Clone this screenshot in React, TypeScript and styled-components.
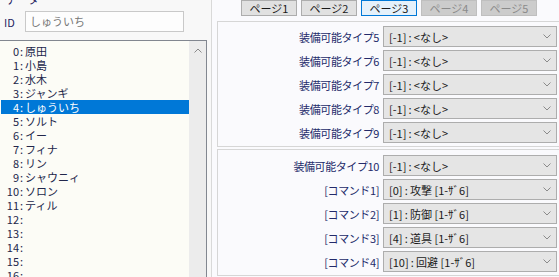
import React from 'react';
import styled, { createGlobalStyle, css } from 'styled-components';

const GlobalStyle = createGlobalStyle`
  html, body {
    margin: 0;
    padding: 0;
    overflow: hidden;
    background: #f0f0f0;
  }
  body {
    font-family: 'Noto Sans CJK JP', 'Noto Sans', sans-serif;
  }
`;

const Shell = styled.div`
  display: flex;
  width: 559px;
  height: 277px;
  overflow: hidden;
`;

const LeftPane = styled.div`
  width: 211px;
  display: flex;
  flex-direction: column;
  background: #f8f8f8;
`;

const CaptionRow = styled.div`
  display: flex;
  align-items: center;
  margin-top: -8px;
  height: 14px;
  padding-left: 6px;
  font-size: 11px;
  color: #1f2360;

  &::after {
    content: '';
    flex: 1;
    margin-left: 2px;
    margin-right: 4px;
    border-top: 1px solid #dcdcdc;
  }
`;

const IdRow = styled.div`
  display: flex;
  align-items: center;
  margin-top: 5px;
  padding-left: 4px;
  height: 21px;
`;

const IdLabel = styled.span`
  width: 21px;
  font-size: 11px;
  color: #1f2360;
`;

const IdInput = styled.div`
  box-sizing: border-box;
  width: 159px;
  height: 21px;
  border: 1px solid #c9c9c9;
  background: #fdfdfd;
  padding-left: 4px;
  font-size: 11px;
  line-height: 19px;
  color: #777777;
`;

const ListBox = styled.div`
  display: flex;
  width: 207px;
  margin-top: 8px;
  flex: 1;
  box-sizing: border-box;
  border-top: 1px solid #828790;
  border-right: 1px solid #828790;
  background: #fcfcf6;
`;

const ListItems = styled.div`
  flex: 1;
  padding-top: 3px;
`;

const Item = styled.div<{ $selected?: boolean }>`
  display: flex;
  height: 14px;
  line-height: 14px;
  margin-left: 1px;
  font-size: 11px;
  color: #22264a;
  white-space: nowrap;
  ${p =>
    p.$selected &&
    css`
      background: #0078d7;
      color: #ffffff;
    `}
`;

const ItemNo = styled.span`
  width: 18px;
  text-align: right;
`;

const Sep = styled.span`
  padding: 0 2px 0 1px;
`;

const ScrollTrack = styled.div`
  width: 17px;
  background: #ececec;
  display: flex;
  justify-content: center;
  padding-top: 7px;
  box-sizing: border-box;
`;

const RightPane = styled.div`
  flex: 1;
  border-left: 1px solid #d9d9d9;
  background: #fafafd;
  padding-left: 5px;
  display: flex;
  flex-direction: column;
`;

const TabRow = styled.div`
  display: flex;
  gap: 4px;
  margin-left: 24px;
  margin-bottom: 5px;
  height: 16px;
`;

const Tab = styled.div<{ $state?: 'active' | 'disabled' }>`
  box-sizing: border-box;
  width: 56px;
  height: 16px;
  border: 1px solid #adadad;
  background: #e1e1e1;
  font-size: 11px;
  line-height: 14px;
  text-align: center;
  color: #1a1a1a;
  ${p =>
    p.$state === 'active' &&
    css`
      border-color: #0078d7;
      background: #e5f1fb;
    `}
  ${p =>
    p.$state === 'disabled' &&
    css`
      border-color: #bfbfbf;
      background: #cccccc;
      color: #8a8a8a;
    `}
`;

const Group = styled.div<{ $padTop: number }>`
  display: flex;
  flex-direction: column;
  gap: 3px;
  border: 1px solid #d6d6d6;
  margin-right: -10px;
  padding: ${p => p.$padTop}px 0 3px 0;
  margin-bottom: 2px;
`;

const Row = styled.div`
  display: flex;
  align-items: center;
  gap: 4px;
  height: 21px;
`;

const FieldLabel = styled.span`
  width: 161px;
  text-align: right;
  font-size: 11px;
  letter-spacing: -0.4px;
  color: #232a6a;
  white-space: nowrap;
`;

const Combo = styled.div`
  box-sizing: border-box;
  width: 174px;
  height: 21px;
  border: 1px solid #adadad;
  background: #e5e5e5;
  display: flex;
  align-items: center;
  justify-content: space-between;
  padding: 0 5px 0 5px;
  font-size: 11px;
  color: #1a1a1a;
  white-space: pre;
`;

const Chevron = ({ up }: { up?: boolean }) => (
  <svg width="8" height="5" viewBox="0 0 8 5">
    <polyline
      points={up ? '0.5,4.5 4,1 7.5,4.5' : '0.5,0.5 4,4 7.5,0.5'}
      fill="none"
      stroke="#8a8a8a"
      strokeWidth="1"
    />
  </svg>
);

const names = [
  '原田',
  '小島',
  '水木',
  'ジャンギ',
  'しゅういち',
  'ソルト',
  'イー',
  'フィナ',
  'リン',
  'シャウニィ',
  'ソロン',
  'ティル',
  '',
  '',
  '',
  '',
  '',
];

// thin spaces mimic the wider colon of the original UI font
const group1 = [
  ['装備可能タイプ5', '[-1]\u2009:\u2009<なし>'],
  ['装備可能タイプ6', '[-1]\u2009:\u2009<なし>'],
  ['装備可能タイプ7', '[-1]\u2009:\u2009<なし>'],
  ['装備可能タイプ8', '[-1]\u2009:\u2009<なし>'],
  ['装備可能タイプ9', '[-1]\u2009:\u2009<なし>'],
];

const group2 = [
  ['装備可能タイプ10', '[-1]\u2009:\u2009<なし>'],
  ['[コマンド1]', '[0]\u2009:\u2009攻撃 [1-ｻﾞ6]'],
  ['[コマンド2]', '[1]\u2009:\u2009防御 [1-ｻﾞ6]'],
  ['[コマンド3]', '[4]\u2009:\u2009道具 [1-ｻﾞ6]'],
  ['[コマンド4]', '[10]\u2009:\u2009回避 [1-ｻﾞ6]'],
];

const tabs: { label: string; state?: 'active' | 'disabled' }[] = [
  { label: 'ページ1' },
  { label: 'ページ2' },
  { label: 'ページ3', state: 'active' },
  { label: 'ページ4', state: 'disabled' },
  { label: 'ページ5', state: 'disabled' },
];

const App: React.FC = () => {
  return (
    <>
      <GlobalStyle />
      <Shell>
        <LeftPane>
          <CaptionRow>データ</CaptionRow>
          <IdRow>
            <IdLabel>ID</IdLabel>
            <IdInput>しゅういち</IdInput>
          </IdRow>
          <ListBox>
            <ListItems>
              {names.map((n, i) => (
                <Item key={i} $selected={i === 4}>
                  <ItemNo>{i}</ItemNo>
                  <Sep>:</Sep>
                  {n}
                </Item>
              ))}
            </ListItems>
            <ScrollTrack>
              <Chevron up />
            </ScrollTrack>
          </ListBox>
        </LeftPane>
        <RightPane>
          <TabRow>
            {tabs.map(t => (
              <Tab key={t.label} $state={t.state}>
                {t.label}
              </Tab>
            ))}
          </TabRow>
          <Group $padTop={4}>
            {group1.map(([label, value]) => (
              <Row key={label}>
                <FieldLabel>{label}</FieldLabel>
                <Combo>
                  {value}
                  <Chevron />
                </Combo>
              </Row>
            ))}
          </Group>
          <Group $padTop={5}>
            {group2.map(([label, value]) => (
              <Row key={label}>
                <FieldLabel>{label}</FieldLabel>
                <Combo>
                  {value}
                  <Chevron />
                </Combo>
              </Row>
            ))}
          </Group>
        </RightPane>
      </Shell>
    </>
  );
};

export default App;
